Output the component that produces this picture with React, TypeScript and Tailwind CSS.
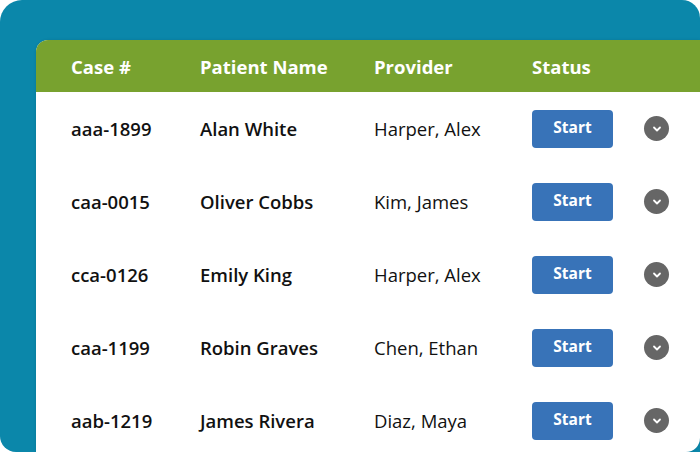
import React from "react";

interface Row {
  caseNo: string;
  patient: string;
  provider: string;
}

const rows: Row[] = [
  { caseNo: "aaa-1899", patient: "Alan White", provider: "Harper, Alex" },
  { caseNo: "caa-0015", patient: "Oliver Cobbs", provider: "Kim, James" },
  { caseNo: "cca-0126", patient: "Emily King", provider: "Harper, Alex" },
  { caseNo: "caa-1199", patient: "Robin Graves", provider: "Chen, Ethan" },
  { caseNo: "aab-1219", patient: "James Rivera", provider: "Diaz, Maya" },
];

const Chevron = () => (
  <div className="w-[25px] h-[25px] rounded-full bg-[#666666] flex items-center justify-center">
    <svg width="12" height="12" viewBox="0 0 12 12" fill="none">
      <path d="M3 4.5L6 7.5L9 4.5" stroke="white" strokeWidth="1.8" strokeLinecap="round" strokeLinejoin="round" />
    </svg>
  </div>
);

const App: React.FC = () => {
  return (
    <div
      className="w-[700px] h-[452px] bg-white overflow-hidden"
      style={{ fontFamily: '"Open Sans", "Noto Sans", sans-serif' }}
    >
      <div className="w-[700px] h-[452px] bg-[#0b87aa] rounded-tl-[22px] rounded-tr-[18px] rounded-bl-[16px] pt-[40px] pl-[36px]">
        <div className="w-[664px] h-[412px] bg-white rounded-tl-[12px] rounded-br-[14px] overflow-hidden shadow-[0_0_3px_rgba(0,0,0,0.12)]">
          <div className="h-[52px] bg-[#78a22f] flex items-center pl-[35px] pt-[2px] text-white text-[18.5px] font-bold">
            <div className="w-[129px]">Case #</div>
            <div className="w-[174px]">Patient Name</div>
            <div className="w-[158px]">Provider</div>
            <div>Status</div>
          </div>
          {rows.map((r, i) => (
            <div key={i} className="h-[73px] flex items-center pl-[35px] text-[18.5px] text-[#111111]">
              <div className="w-[129px] font-semibold">{r.caseNo}</div>
              <div className="w-[174px] font-semibold">{r.patient}</div>
              <div className="w-[158px]">{r.provider}</div>
              <button className="w-[81px] h-[38px] rounded-[4px] bg-[#3873b8] text-white text-[15.5px] font-bold pb-[2px]">
                Start
              </button>
              <div className="ml-[31px]">
                <Chevron />
              </div>
            </div>
          ))}
        </div>
      </div>
    </div>
  );
};

export default App;
